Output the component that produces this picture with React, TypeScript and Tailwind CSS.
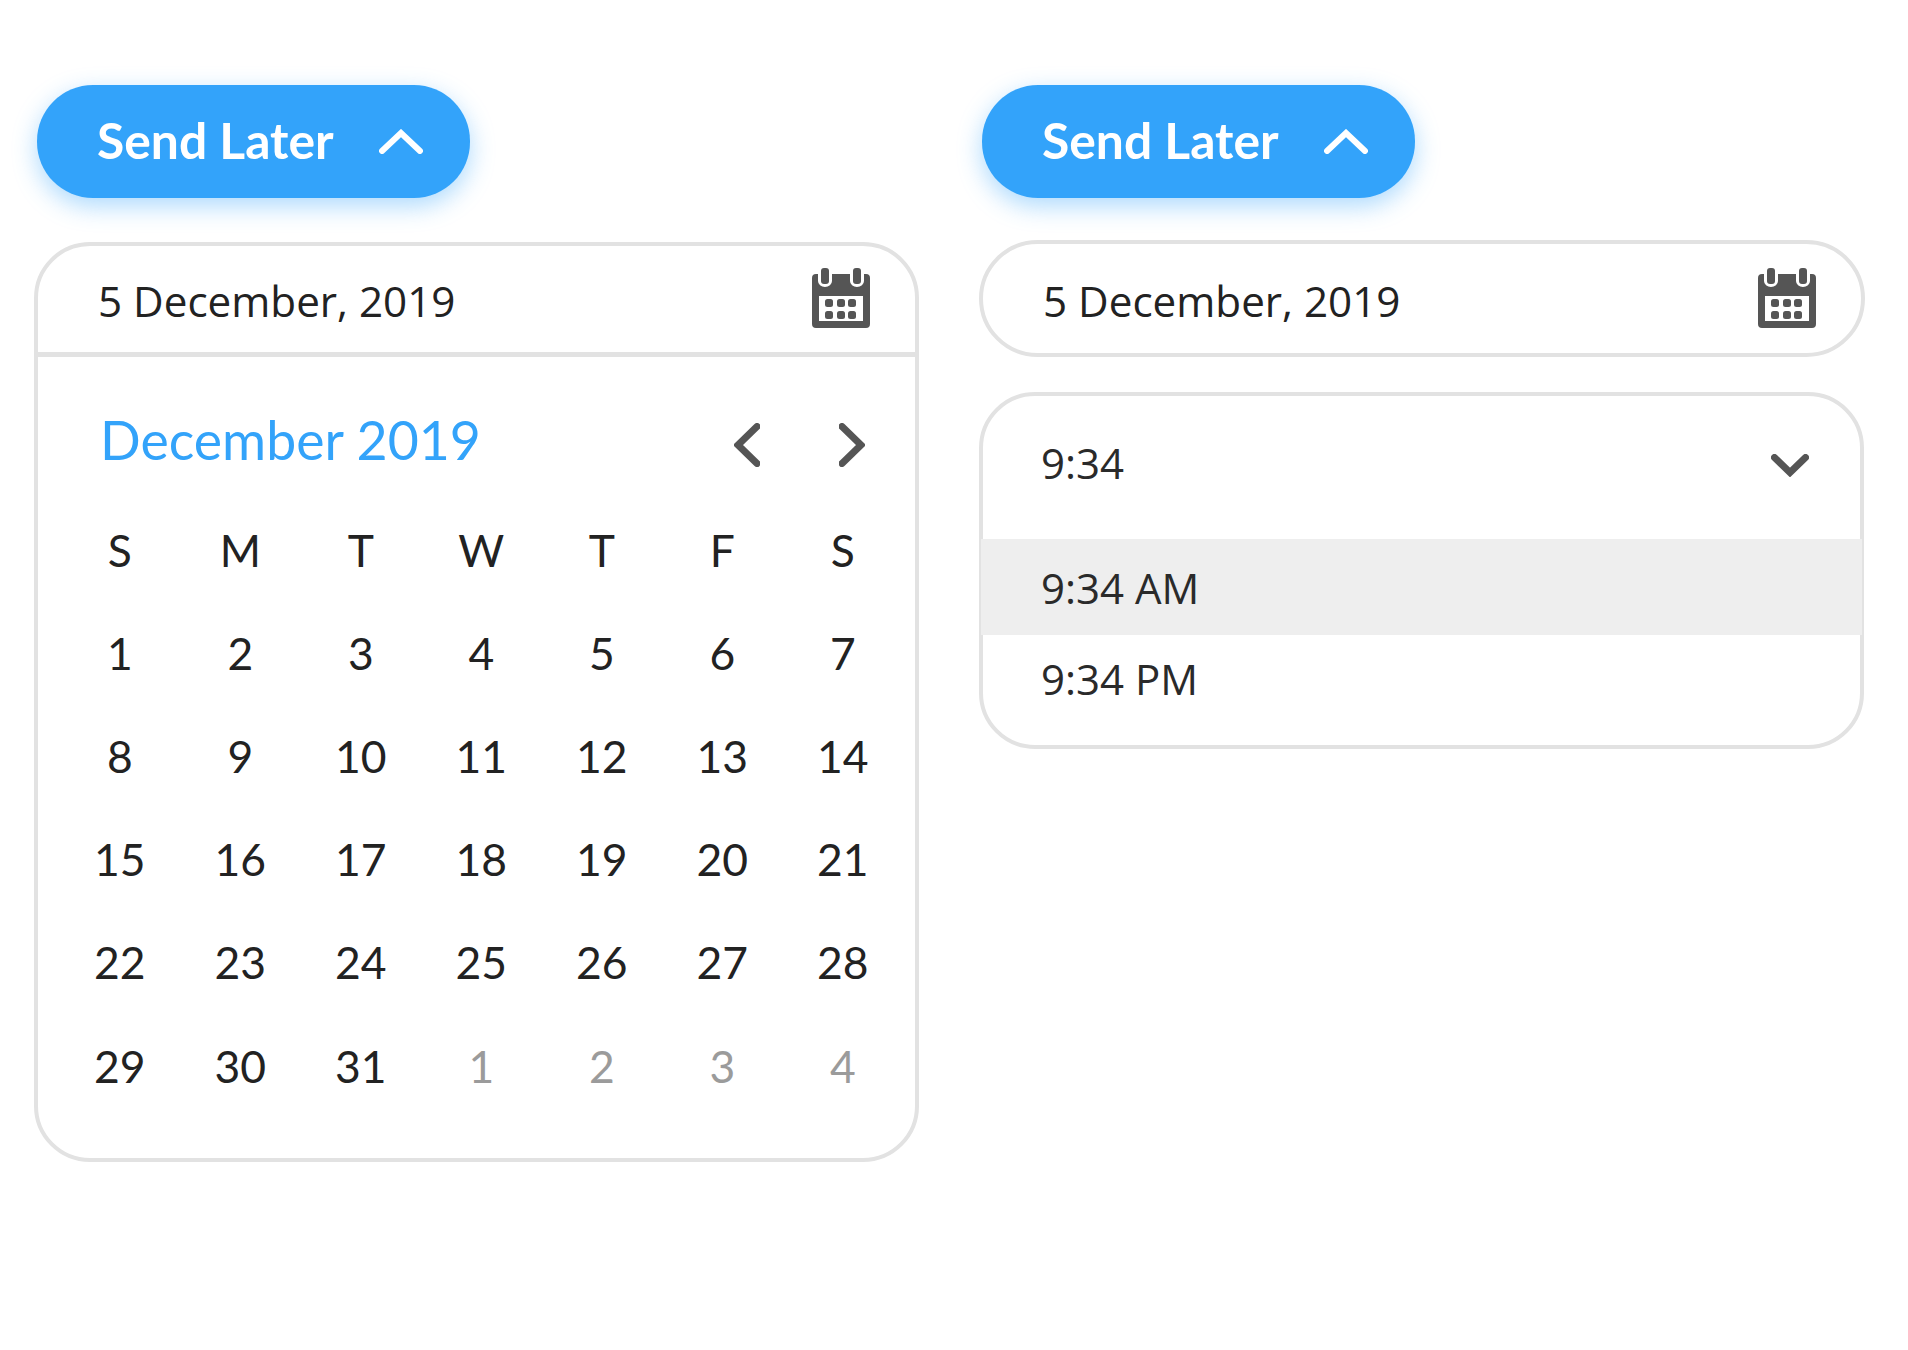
import * as React from "react";

const weeks = [
    ["1", "2", "3", "4", "5", "6", "7"],
    ["8", "9", "10", "11", "12", "13", "14"],
    ["15", "16", "17", "18", "19", "20", "21"],
    ["22", "23", "24", "25", "26", "27", "28"],
];

const CalendarIcon: React.FC = () => (
    <svg width="58" height="60" viewBox="0 0 58 60" className="block shrink-0">
        <path
            d="M4 6h2v7a7 6 0 0 0 7 6a7 6 0 0 0 7-6V6h18v7a7 6 0 0 0 7 6a7 6 0 0 0 7-6V6h2a4 4 0 0 1 4 4v46a4 4 0 0 1-4 4H4a4 4 0 0 1-4-4V10a4 4 0 0 1 4-4z"
            fill="#555555"
        />
        <rect x="9" y="0" width="8" height="16" rx="3" fill="#555555" />
        <rect x="41" y="0" width="8" height="16" rx="3" fill="#555555" />
        <rect x="7" y="28" width="44" height="25" fill="#ffffff" />
        {[13, 25, 36].map((x) =>
            [31, 43].map((y) => <rect key={`${x}-${y}`} x={x} y={y} width="8" height="8" rx="2.5" fill="#555555" />),
        )}
    </svg>
);

const Chevron: React.FC<{ d: string; w: number; h: number; color?: string; sw?: number }> = ({ d, w, h, color = "#555555", sw = 7 }) => (
    <svg width={w} height={h} viewBox={`0 0 ${w} ${h}`} fill="none" className="block shrink-0">
        <path d={d} stroke={color} strokeWidth={sw} strokeLinecap="round" strokeLinejoin="miter" />
    </svg>
);

const SendLater: React.FC = () => (
    <button className="flex h-[113px] w-[433px] items-center rounded-[56px] bg-[#33a3fa] pl-[60px] font-['Lato',sans-serif] text-[49.8px] font-bold whitespace-nowrap text-white shadow-[0_8px_24px_rgba(51,163,250,0.4)]">
        <span className="-mt-[2px] w-[282px] text-left">Send Later</span>
        <Chevron d="M3 22 L22 4 L41 22" w={44} h={25} color="#ffffff" sw={6} />
    </button>
);

const DateRow: React.FC<{ top: string }> = ({ top }) => (
    <div className={`flex items-start justify-between pl-[60px] pr-[45px] ${top}`}>
        <span className="mt-[3px] font-['Open_Sans',sans-serif] text-[42.2px] leading-[60px] text-[#222222]">5 December, 2019</span>
        <CalendarIcon />
    </div>
);

export default function App() {
    return (
        <div className="flex h-[1350px] w-[1908px] items-start gap-[60px] bg-white pl-[34px] pt-[85px]">
            <div className="w-[885px]">
                <div className="pl-[3px]">
                    <SendLater />
                </div>
                <div className="mt-[44px] h-[920px] rounded-[56px] border-4 border-[#e2e2e2] font-['Lato',sans-serif]">
                    <div className="h-[111px] border-b-[5px] border-[#e2e2e2]">
                        <DateRow top="pt-[22px]" />
                    </div>
                    <div className="flex h-[110px] items-start justify-between pl-[62px] pr-[50px] pt-[50px]">
                        <span className="text-[53.6px] leading-[64px] text-[#33a3fa]">December 2019</span>
                        <div className="mt-[16px] flex items-center gap-[79px]">
                            <Chevron d="M23 3.5 L4 22 L23 40.5" w={26} h={44} />
                            <Chevron d="M3 3.5 L22 22 L3 40.5" w={26} h={44} />
                        </div>
                    </div>
                    <div className="grid grid-cols-[repeat(7,120.5px)] pl-[21.5px] pt-[30.5px] text-[44.4px] leading-[103.2px] text-[#222222]">
                        {["S", "M", "T", "W", "T", "F", "S"].map((d, i) => (
                            <div key={i} className="text-center">{d}</div>
                        ))}
                        {weeks.flat().map((d) => (
                            <div key={d} className="text-center">{d}</div>
                        ))}
                        {["29", "30", "31"].map((d) => (
                            <div key={d} className="text-center">{d}</div>
                        ))}
                        {["1", "2", "3", "4"].map((d) => (
                            <div key={d} className="text-center text-[#9b9b9b]">{d}</div>
                        ))}
                    </div>
                </div>
            </div>
            <div className="w-[886px]">
                <div className="pl-[3px]">
                    <SendLater />
                </div>
                <div className="mt-[42px] h-[117px] rounded-full border-4 border-[#e2e2e2]">
                    <DateRow top="pt-[24px]" />
                </div>
                <div className="mt-[35px] h-[357px] w-[885px] rounded-[56px] border-4 border-[#e2e2e2] font-['Open_Sans',sans-serif] text-[42px] text-[#2a2a2a]">
                    <div className="flex h-[143px] items-center justify-between pb-[10px] pl-[58px] pr-[51px]">
                        <span>9:34</span>
                        <div className="mt-[5px]">
                            <Chevron d="M3.5 3.5 L19 18.5 L34.5 3.5" w={38} h={23} />
                        </div>
                    </div>
                    <div className="-mx-[2px] flex h-[96px] items-center bg-[#eeeeee] pl-[60px]">9:34 AM</div>
                    <div className="flex h-[87px] items-center pl-[58px]">9:34 PM</div>
                </div>
            </div>
        </div>
    );
}
